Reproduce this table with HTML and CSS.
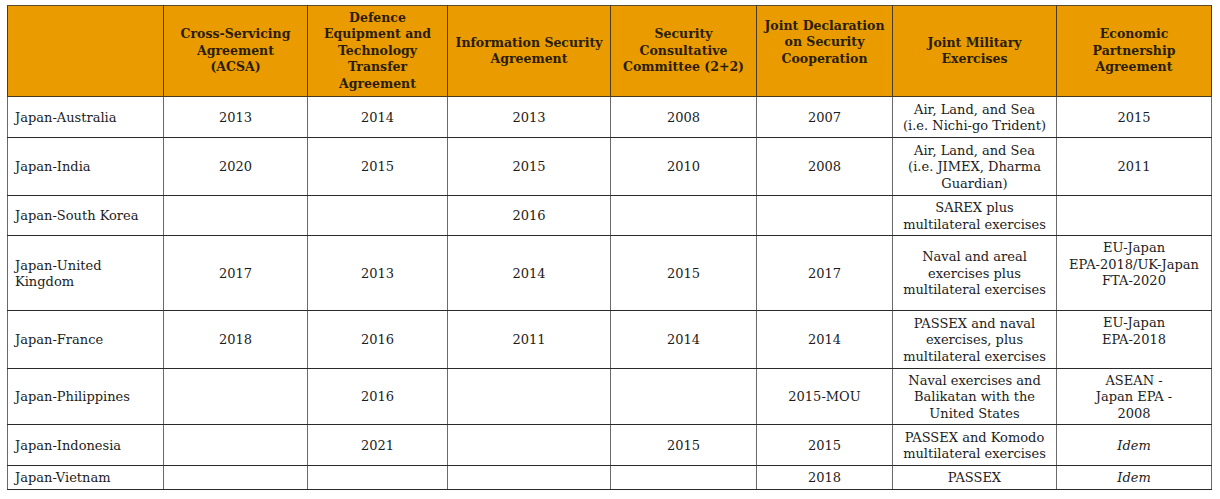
FILE: index.html
```html
<!DOCTYPE html>
<html lang="en">
<head>
<meta charset="utf-8">
<title>Japan security agreements</title>
<link rel="stylesheet" href="styles.css">
</head>
<body>
<table class="grid">
  <colgroup>
    <col class="c0"><col class="c1"><col class="c2"><col class="c3"><col class="c4"><col class="c5"><col class="c6"><col class="c7">
  </colgroup>
  <thead>
    <tr class="rh">
      <th></th>
      <th>Cross-Servicing<br>Agreement<br>(ACSA)</th>
      <th>Defence<br>Equipment and<br>Technology<br>Transfer<br>Agreement</th>
      <th>Information Security<br>Agreement</th>
      <th>Security<br>Consultative<br>Committee (2+2)</th>
      <th class="raise">Joint Declaration<br>on Security<br>Cooperation</th>
      <th>Joint Military<br>Exercises</th>
      <th>Economic<br>Partnership<br>Agreement</th>
    </tr>
  </thead>
  <tbody>
    <tr class="r1">
      <td class="name">Japan-Australia</td><td>2013</td><td>2014</td><td>2013</td><td>2008</td><td>2007</td>
      <td>Air, Land, and Sea<br>(i.e. Nichi-go Trident)</td><td>2015</td>
    </tr>
    <tr class="r2">
      <td class="name">Japan-India</td><td>2020</td><td>2015</td><td>2015</td><td>2010</td><td>2008</td>
      <td>Air, Land, and Sea<br>(i.e. JIMEX, Dharma<br>Guardian)</td><td>2011</td>
    </tr>
    <tr class="r3">
      <td class="name">Japan-South Korea</td><td></td><td></td><td>2016</td><td></td><td></td>
      <td>SAREX plus<br>multilateral exercises</td><td></td>
    </tr>
    <tr class="r4">
      <td class="name">Japan-United<br>Kingdom</td><td>2017</td><td>2013</td><td>2014</td><td>2015</td><td>2017</td>
      <td>Naval and areal<br>exercises plus<br>multilateral exercises</td><td class="top">EU-Japan<br>EPA-2018/UK-Japan<br>FTA-2020</td>
    </tr>
    <tr class="r5">
      <td class="name">Japan-France</td><td>2018</td><td>2016</td><td>2011</td><td>2014</td><td>2014</td>
      <td>PASSEX and naval<br>exercises, plus<br>multilateral exercises</td><td class="top">EU-Japan<br>EPA-2018</td>
    </tr>
    <tr class="r6">
      <td class="name">Japan-Philippines</td><td></td><td>2016</td><td></td><td></td><td>2015-MOU</td>
      <td>Naval exercises and<br>Balikatan with the<br>United States</td><td>ASEAN -<br>Japan EPA -<br>2008</td>
    </tr>
    <tr class="r7">
      <td class="name">Japan-Indonesia</td><td></td><td>2021</td><td></td><td>2015</td><td>2015</td>
      <td>PASSEX and Komodo<br>multilateral exercises</td><td><em>Idem</em></td>
    </tr>
    <tr class="r8">
      <td class="name">Japan-Vietnam</td><td></td><td></td><td></td><td></td><td>2018</td>
      <td>PASSEX</td><td><em>Idem</em></td>
    </tr>
  </tbody>
</table>
</body>
</html>
```

FILE: styles.css
```css
html, body {
  margin: 0;
  background: #ffffff;
}

body {
  padding: 5px 0 0 7px;
  font-family: "DejaVu Serif", "Liberation Serif", serif;
  font-size: 13px;
  line-height: 16.5px;
  color: #1c1c1c;
}

.grid {
  border-collapse: collapse;
  table-layout: fixed;
  width: 1204px;
  border: 1px solid #2e2e2e;
}

.c0 { width: 156px; }
.c1 { width: 144px; }
.c2 { width: 140px; }
.c3 { width: 163px; }
.c4 { width: 146px; }
.c5 { width: 136px; }
.c6 { width: 164px; }
.c7 { width: 155px; }

.grid th,
.grid td {
  padding: 2px 5px 0;
  text-align: center;
  vertical-align: middle;
  white-space: nowrap;
  border-left: 1px solid #6a6a6a;
  border-right: 1px solid #6a6a6a;
  border-top: 1px solid #2a2a2a;
  border-bottom: 1px solid #2a2a2a;
}

.grid th {
  background: #e99b00;
  color: #2a1d05;
  font-weight: bold;
  font-size: 12.5px;
  padding-top: 0;
  border-left-color: #4a3a1a;
  border-right-color: #4a3a1a;
  border-top-color: #5a4a2a;
  border-bottom-color: #4a3a1a;
}

.grid th.raise {
  padding-bottom: 17px;
}

.grid td.name {
  text-align: left;
  padding-left: 7px;
}

.grid td.top {
  vertical-align: top;
  padding-top: 4px;
}

.rh { height: 91px; }
.r1 { height: 41px; }
.r2 { height: 58px; }
.r3 { height: 40px; }
.r4 { height: 75px; }
.r5 { height: 58px; }
.r6 { height: 56px; }
.r7 { height: 41px; }
.r8 { height: 24px; }
```
